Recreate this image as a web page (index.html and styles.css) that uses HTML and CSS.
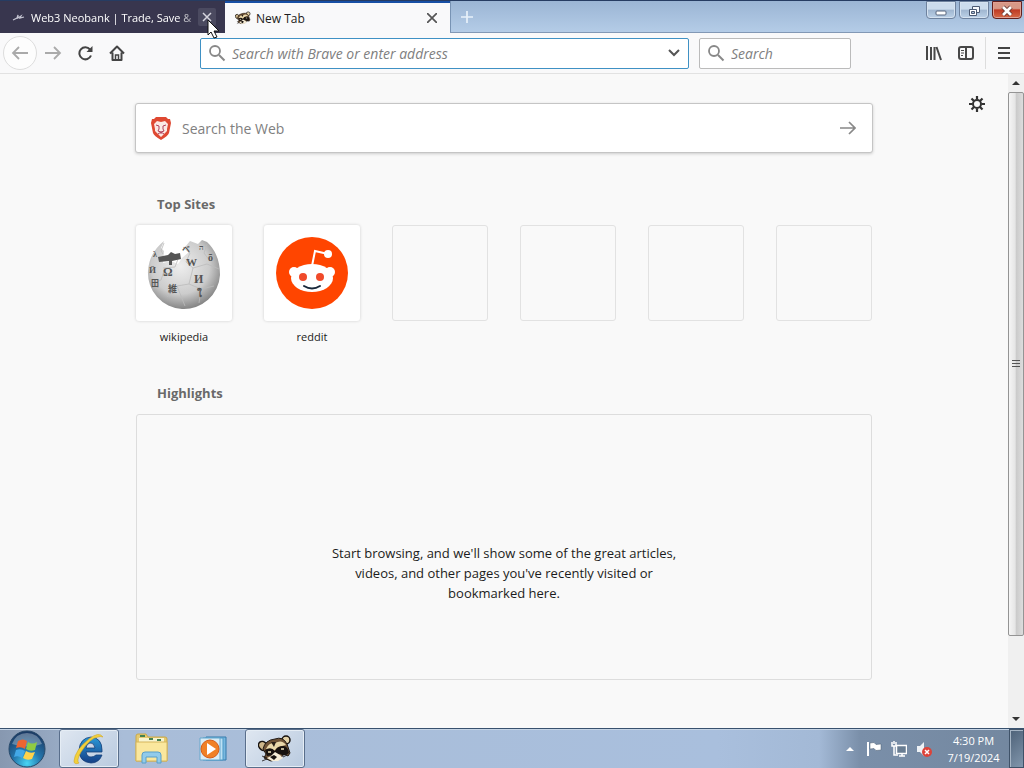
FILE: index.html
```html
<!DOCTYPE html>
<html lang="en">
<head>
  <meta charset="UTF-8" />
  <meta name="viewport" content="width=device-width, initial-scale=1.0"/>
  <title>New Tab</title>
  <link rel="stylesheet" href="styles.css">
</head>
<body>
  <header class="tab-bar">
    <div class="tab tab-inactive">
      <svg class="favicon" viewBox="0 0 16 16"><path d="M3 11l4-2 1-3v3l3-2-1 2 4-1" fill="none" stroke="#c5c5d2" stroke-width="1.2"/></svg>
      <span class="tab-title">Web3 Neobank | Trade, Save &amp;</span>
      <button class="tab-close" aria-label="Close tab">
        <svg width="10" height="10" viewBox="0 0 10 10"><path d="M1 1l8 8M9 1L1 9" stroke="currentColor" stroke-width="1.5"/></svg>
      </button>
      <svg class="cursor" width="13" height="20" viewBox="0 0 13 20"><path d="M1 1v15l3-3 3 6 3-1-3-6h5z" fill="#fff" stroke="#111" stroke-width="1"/></svg>
    </div>
    <div class="tab tab-active">
      <svg class="favicon" viewBox="0 0 34 28"><use href="#raccoon"/></svg>
      <span class="tab-title">New Tab</span>
      <button class="tab-close" aria-label="Close tab">
        <svg width="10" height="10" viewBox="0 0 10 10"><path d="M0 0l10 10M10 0L0 10" stroke="currentColor" stroke-width="1.7"/></svg>
      </button>
    </div>
    <button class="new-tab" aria-label="New tab">
      <svg width="14" height="14" viewBox="0 0 14 14"><path d="M7 1v12M1 7h12" stroke="#e8f1fa" stroke-width="1.7"/></svg>
    </button>
    <div class="window-buttons">
      <button aria-label="Minimize"><svg width="28" height="15" viewBox="0 0 28 15"><rect x="9" y="8" width="10" height="4" rx="1" fill="#fff" stroke="#56647d"/></svg></button>
      <button aria-label="Restore"><svg width="28" height="15" viewBox="0 0 28 15"><path d="M12.500 3.500h7v6h-7z" fill="#f7f9fc" stroke="#4c5a73"/><path d="M9.500 6.500h7v6h-7z" fill="#fff" stroke="#4c5a73"/><path d="M11.500 8.500h3v2h-3z" fill="#a9bdd6" stroke="#4c5a73"/></svg></button>
      <button class="window-close" aria-label="Close"><svg width="28" height="15" viewBox="0 0 28 15"><path d="M10 4l8 8M18 4l-8 8" stroke="#66352f" stroke-width="4.500"/><path d="M10 4l8 8M18 4l-8 8" stroke="#fff" stroke-width="2.700"/></svg></button>
    </div>
  </header>

  <nav class="toolbar">
    <button class="back" aria-label="Back">
      <svg width="18" height="16" viewBox="0 0 18 16"><path d="M17 8H2M8 2L2 8l6 6" fill="none" stroke="#aaa" stroke-width="1.800"/></svg>
    </button>
    <button class="tool" aria-label="Forward">
      <svg width="18" height="16" viewBox="0 0 18 16"><path d="M1 8h15M10 2l6 6-6 6" fill="none" stroke="#aaa" stroke-width="1.800"/></svg>
    </button>
    <button class="tool" aria-label="Reload">
      <svg width="16" height="16" viewBox="0 0 16 16"><path d="M14 10.500A6 6 0 1 1 13 4.500" fill="none" stroke="#444" stroke-width="2"/><path d="M15.500 1v6h-6z" fill="#444"/></svg>
    </button>
    <button class="tool" aria-label="Home">
      <svg width="16" height="16" viewBox="0 0 16 16"><path d="M1 8.500L8 1.500l7 7M3.500 7.500V15h9V7.500" fill="none" stroke="#444" stroke-width="2" stroke-linejoin="round"/><path d="M6.500 15v-5h3v5" fill="none" stroke="#444" stroke-width="1.500"/></svg>
    </button>
    <div class="field address">
      <svg width="18" height="18" viewBox="0 0 18 18"><circle cx="7" cy="7" r="5" fill="none" stroke="#888" stroke-width="1.800"/><path d="M11 11l5.500 5.500" stroke="#888" stroke-width="2"/></svg>
      <input type="text" aria-label="Address" placeholder="Search with Brave or enter address">
      <button class="dropdown" aria-label="Show history">
        <svg width="12" height="8" viewBox="0 0 12 8"><path d="M1 1l5 5 5-5" fill="none" stroke="#555" stroke-width="2"/></svg>
      </button>
    </div>
    <div class="field search">
      <svg width="18" height="18" viewBox="0 0 18 18"><circle cx="7" cy="7" r="5" fill="none" stroke="#888" stroke-width="1.800"/><path d="M11 11l5.500 5.500" stroke="#888" stroke-width="2"/></svg>
      <input type="text" aria-label="Search" placeholder="Search">
    </div>
    <div class="tools-end">
      <button class="tool" aria-label="Library">
        <svg width="16" height="16" viewBox="0 0 16 16"><path d="M1 1v14M5 2v13M8.500 2v13M10.500 2L15 15" stroke="#484848" stroke-width="2"/></svg>
      </button>
      <button class="tool" aria-label="Sidebars">
        <svg width="16" height="16" viewBox="0 0 16 16"><rect x="1" y="2" width="14" height="12" rx="2" fill="none" stroke="#484848" stroke-width="2"/><path d="M8 2v12" stroke="#484848" stroke-width="2"/><path d="M3 5.500h3M3 8h3M3 10.500h2" stroke="#484848"/></svg>
      </button>
      <button class="tool menu" aria-label="Menu">
        <svg width="12" height="12" viewBox="0 0 12 12"><path d="M0 1h12M0 6h12M0 11h12" stroke="#444" stroke-width="2"/></svg>
      </button>
    </div>
  </nav>

  <div class="viewport">
    <main>
      <button class="settings" aria-label="Settings">
        <svg width="16" height="16" viewBox="0 0 16 16"><circle cx="8" cy="8" r="4" fill="none" stroke="#333" stroke-width="2"/><path d="M8 0v3.500M8 12.500V16M0 8h3.500M12.500 8H16M2.500 2.500L5 5M11 11l2.500 2.500M13.500 2.500L11 5M5 11l-2.500 2.500" stroke="#333" stroke-width="2.200"/></svg>
      </button>
      <div class="content">
        <form class="web-search">
          <svg width="22" height="25" viewBox="0 0 22 25"><path d="M6 1h10l2 2h2l1 4-2 10q-1 3-8 7-7-4-8-7L1 7l1-4h2z" fill="#df4932"/><path d="M7 5l4 1 4-1 3 3-1 5v2l-6 6-6-6v-2L4 8z" fill="#fbe9e4"/><path d="M6 9l3 1M16 9l-3 1M9 10v3l-1 2 3 1 3-1-1-2v-3M11 16v2M8 18l3-2 3 2" fill="none" stroke="#b0405a" stroke-width="1"/></svg>
          <input type="text" aria-label="Search the Web" placeholder="Search the Web">
          <button type="button" aria-label="Search">
            <svg width="16" height="14" viewBox="0 0 16 14"><path d="M0 7h15M9 1l6 6-6 6" fill="none" stroke="#888" stroke-width="1.700"/></svg>
          </button>
        </form>

        <h2>Top Sites</h2>
        <div class="sites">
          <a class="site" href="#wikipedia">
            <span class="tile">
              <svg width="76" height="76" viewBox="0 0 76 76">
                <defs><radialGradient id="globe" cx="45%" cy="38%" r="62%"><stop offset="0" stop-color="#eee"/><stop offset=".65" stop-color="#ccc"/><stop offset="1" stop-color="#858585"/></radialGradient></defs>
                <path d="M18 6Q3 18 2 36a36 36 0 0 0 72 4Q74 19 61 7l-5-2-4 4-8-3-5 6 4 5-7 6-4 6-7-3-8 2 1-12-3-3z" fill="url(#globe)"/>
                <path d="M18 8l-3 8 2 3M17 33l12-1 3-8M37 12l7 6-4 9 7 6M47 33l14-4 12 5M47 33l-4 16 12 5M19 33l-4 12-10 4M43 49l-12 2-10 11M31 51l8 20M55 54l13-3M55 54l-2 14M61 9l-3 9 6 8" fill="none" stroke="#bbb" stroke-width=".8"/>
                <path d="M12 22l10-2 3-3 4 2 5-1 1 6-9 2v4h-3v-4l-10 1z" fill="#555"/>
                <g class="globe-letters"><text x="17" y="41" font-size="12">Ω</text><text x="40" y="31" font-size="11">W</text><text x="48" y="48" font-size="12">И</text><text x="22" y="57" font-size="9">維</text><text x="36" y="17" font-size="8">ベ</text><text x="62" y="26" font-size="10">õ</text><text x="3" y="38" font-size="9">Й</text><text x="5" y="51" font-size="8">田</text><text x="51" y="62" font-size="10">ใ</text><text x="53" y="15" font-size="8">ה</text><text x="7" y="22" font-size="8">λ</text></g>
              </svg>
            </span>
            <span class="site-name">wikipedia</span>
          </a>
          <a class="site" href="#reddit">
            <span class="tile">
              <svg width="76" height="76" viewBox="0 0 76 76"><circle cx="38" cy="38" r="36" fill="#ff4500"/><path d="M38 31l3-15 13 3" fill="none" stroke="#fff" stroke-width="2"/><circle cx="54" cy="19" r="4" fill="#fff"/><circle cx="20" cy="37" r="5" fill="#fff"/><circle cx="56" cy="37" r="5" fill="#fff"/><ellipse cx="38" cy="43" rx="21" ry="14" fill="#fff"/><circle cx="29" cy="42" r="4" fill="#f04a2a"/><circle cx="46" cy="42" r="4" fill="#f04a2a"/><path d="M30 51q8 5 16 0" fill="none" stroke="#18283a" stroke-width="2" stroke-linecap="round"/></svg>
            </span>
            <span class="site-name">reddit</span>
          </a>
          <div class="site"><span class="tile tile-empty"></span></div>
          <div class="site"><span class="tile tile-empty"></span></div>
          <div class="site"><span class="tile tile-empty"></span></div>
          <div class="site"><span class="tile tile-empty"></span></div>
        </div>

        <h2>Highlights</h2>
        <section class="highlights">
          <p>Start browsing, and we'll show some of the great articles, videos, and other pages you've recently visited or bookmarked here.</p>
        </section>
      </div>
    </main>
    <div class="scrollbar">
      <button aria-label="Scroll up"><svg width="8" height="4" viewBox="0 0 8 4"><path d="M0 4l4-4 4 4z" fill="#333"/></svg></button>
      <div class="track">
        <div class="thumb"><svg width="8" height="8" viewBox="0 0 8 8"><path d="M0 .5h8M0 3.500h8M0 6.500h8" stroke="#555"/></svg></div>
      </div>
      <button aria-label="Scroll down"><svg width="8" height="4" viewBox="0 0 8 4"><path d="M0 0l4 4 4-4z" fill="#333"/></svg></button>
    </div>
  </div>

  <footer class="taskbar">
    <button class="start" aria-label="Start">
      <svg width="38" height="38" viewBox="0 0 38 38">
        <defs><radialGradient id="orb" cx="50%" cy="90%" r="85%"><stop offset="0" stop-color="#49d5f4"/><stop offset=".45" stop-color="#2477ad"/><stop offset="1" stop-color="#1b3b66"/></radialGradient></defs>
        <circle cx="19" cy="19" r="18" fill="url(#orb)" stroke="#284969"/><path d="M4 14Q8 3 19 3t15 11q-14 5-30 0z" fill="#fff" opacity=".3"/>
        <path d="M10 11q5-3 9 0l-2 8q-4-3-9-1z" fill="#ee6531"/><path d="M20 12q4 3 9 0l-2 8q-5 2-9-1z" fill="#8fcb43"/><path d="M8 20q5-2 9 1l-3 7q-4-3-8-1z" fill="#43a8e7"/><path d="M18 21q4 3 9 1l-3 7q-5 2-9-1z" fill="#ffd24a"/>
      </svg>
    </button>
    <button class="task task-open" aria-label="Internet Explorer">
      <svg width="34" height="32" viewBox="0 0 34 32">
        <defs><linearGradient id="ie" x2="0" y2="1"><stop offset="0" stop-color="#2a9ad8"/><stop offset="1" stop-color="#153f86"/></linearGradient></defs>
        <path d="M30 19H14q1 5 5 5 3 0 5-2h6q-3 8-11 8-12-1-12-13Q8 5 19 4q11 1 11 13zM14 15h9q-1-5-4-5-4 0-5 5z" fill="url(#ie)" stroke="#153f79" stroke-width=".8" fill-rule="evenodd"/>
        <path d="M31 4Q27-2 17 6 3 17 2 28q0 4 5 2-3-2 2-11Q18 5 26 4q3-1 5 0z" fill="#f2d03c" stroke="#d1a724" stroke-width=".6"/>
      </svg>
    </button>
    <button class="task" aria-label="Windows Explorer">
      <svg width="34" height="32" viewBox="0 0 34 32"><path d="M2 3q0-2 2-2h8l2 3h17q2 0 2 2v22H2z" fill="#e5ca70" stroke="#c9a84b"/><path d="M5 5h25v5H5z" fill="#f8f4cf"/><path d="M6 3h5M15 6h4M23 7h4" stroke="#438252" stroke-width="2"/><path d="M2 9h31v19H2z" fill="#fae79d" stroke="#d5b65c"/><path d="M8 30v-8q0-3 3-3h13q3 0 3 3v8h-4v-6H12v6z" fill="#91cbea" stroke="#589fc9"/></svg>
    </button>
    <button class="task" aria-label="Media Player">
      <svg width="34" height="32" viewBox="0 0 34 32"><path d="M10 4h20v23H10z" fill="#79b8df" stroke="#347bac"/><path d="M7 5h20v22H7z" fill="#bce1f4" stroke="#4c98c6"/><path d="M4 5h20v22H4z" fill="#d9edf6" stroke="#66a8cd"/><circle cx="14" cy="16" r="9" fill="#f08126" stroke="#d75c17"/><path d="M11 10l9 6-9 6z" fill="#fff"/></svg>
    </button>
    <button class="task task-open" aria-label="Browser">
      <svg width="34" height="28" viewBox="0 0 34 28">
        <g id="raccoon">
          <ellipse cx="5" cy="11" rx="4" ry="5" fill="#cdb68b" stroke="#17120f" stroke-width="1.500" transform="rotate(-40 5 11)"/>
          <circle cx="28" cy="5" r="4" fill="#e5d3a8" stroke="#17120f" stroke-width="1.500"/>
          <path d="M5 14Q7 5 17 4q8-3 12 5l3 9-2 3-4-2-4 5-9 2-7-3 2-4z" fill="#705437" stroke="#221a14"/>
          <path d="M8 14q3-7 9-6 7-4 11 2l-8 2-4 4z" fill="#ead8aa"/>
          <path d="M13 7l3 5 2-5z" fill="#2b211a"/>
          <path d="M7 15q6-4 10 1 2-5 9-5 4 1 5 7-4 4-9 1l-5 1-8 1z" fill="#17120f"/>
          <path d="M17 17l5 3 3 3-5 3h-6l-5-3 4-2z" fill="#f7eed8"/>
          <path d="M12 22l4-2 3 2-3 3z" fill="#17120f"/>
          <path d="M10 17h3M23 14h3" stroke="#f2e5bd" stroke-width="1.500"/>
          <path d="M4 21l5 2M4 26l5-2M29 20l-4 2" stroke="#17120f" stroke-width=".8"/>
        </g>
      </svg>
    </button>
    <div class="tray">
      <svg width="8" height="4" viewBox="0 0 8 4"><path d="M0 4l4-4 4 4z" fill="#fff"/></svg>
      <svg width="16" height="16" viewBox="0 0 16 16"><path d="M2 1v14" stroke="#fff" stroke-width="2"/><path d="M4 2l4-.5 2 2 5-.5v6l-5 .5-2-2-4 .5z" fill="#fff" stroke="#4b5c70" stroke-width=".5"/></svg>
      <svg width="16" height="16" viewBox="0 0 16 16"><path d="M5.500 4.500h10v8h-10z" fill="#697d92" stroke="#fff" stroke-width="1.500"/><path d="M8 15h6M11 12v3M1 1v4h4V1M3 5v9h4M3 0v3" fill="none" stroke="#fff" stroke-width="1.500"/></svg>
      <svg width="16" height="16" viewBox="0 0 16 16"><path d="M1 5h3l4-4v14l-4-4H1z" fill="#edf1f5"/><circle cx="11" cy="11" r="5" fill="#dc4339"/><path d="M9 9l4 4M13 9l-4 4" stroke="#fff" stroke-width="1.500"/></svg>
    </div>
    <div class="clock">
      <time>4:30 PM</time>
      <time datetime="2024-07-19">7/19/2024</time>
    </div>
    <button class="show-desktop" aria-label="Show desktop"></button>
  </footer>
</body>
</html>
```
FILE: styles.css
```css
:root {
  --tab-dark: #38364e;
  --chrome: #f9f9fa;
  --page: #f9f9f9;
  --focus: #3f91c4;
  --muted: #808080;
  --ink: #1c1c20;
}

* {
  box-sizing: border-box;
}

body {
  margin: 0;
  height: 100vh;
  display: flex;
  flex-direction: column;
  overflow: hidden;
  font-family: "Open Sans", "Noto Sans", "Noto Sans CJK SC", sans-serif;
  font-size: 12px;
  color: var(--ink);
  background: var(--page);
}

button {
  display: flex;
  align-items: center;
  justify-content: center;
  flex-shrink: 0;
  padding: 0;
  border: none;
  background: none;
  color: inherit;
}

svg {
  flex-shrink: 0;
}

input {
  flex: 1;
  min-width: 0;
  padding: 0;
  border: none;
  outline: none;
  background: none;
  font-family: inherit;
}

input::placeholder {
  color: var(--muted);
  opacity: 1;
}

/* tabs */
.tab-bar {
  display: flex;
  height: 33px;
  flex-shrink: 0;
  border-top: 1px solid #263c62;
  border-bottom: 1px solid #8298b5;
  background: linear-gradient(#9bb5d4, #b4cce7);
}

.tab {
  position: relative;
  display: flex;
  align-items: center;
  width: 225px;
  height: 32px;
  padding: 0 9px 0 10px;
}

.tab-inactive {
  color: #fff;
  background: var(--tab-dark);
}

.tab-active {
  border-top: 2px solid #174fa5;
  background: var(--chrome);
}

.favicon {
  width: 16px;
  height: 16px;
  margin-right: 5px;
}

.tab-title {
  flex: 1;
  white-space: nowrap;
}

.tab-inactive .tab-title {
  font-size: 11px;
  font-weight: 500;
  mask-image: linear-gradient(to right, #000 90%, transparent 105%);
}

.tab-close {
  width: 18px;
  height: 18px;
  margin-left: 4px;
  border-radius: 2px;
  color: #555;
}

.tab-inactive .tab-close {
  color: #d5d5de;
  background: #4b4a60;
}

.cursor {
  position: absolute;
  top: 18px;
  left: 207px;
  z-index: 2;
}

.new-tab {
  width: 32px;
  border-left: 1px solid #7893b4;
}

.window-buttons {
  display: flex;
  gap: 3px;
  height: 18px;
  margin: 0 2px 0 auto;
}

.window-buttons button {
  width: 30px;
  border: 1px solid #6e829e;
  border-radius: 0 0 4px 4px;
  background: linear-gradient(#ccdced 45%, #a0b6d0 50%, #bcd1e7);
  box-shadow: inset 0 0 0 1px #d5e2f0;
}

.window-buttons .window-close {
  border-color: #63201d;
  background: linear-gradient(#d79887 40%, #bf3b25 50%, #d76a47);
  box-shadow: inset 0 0 0 1px #dfa194;
}

/* toolbar */
.toolbar {
  display: flex;
  align-items: center;
  height: 41px;
  flex-shrink: 0;
  padding: 0 2px 0 3px;
  border-bottom: 1px solid #e2e2e2;
  background: var(--chrome);
}

.back {
  width: 34px;
  height: 34px;
  border: 1px solid #ddd;
  border-radius: 50%;
  background: #fdfdfd;
}

.tool {
  width: 32px;
  height: 32px;
}

.field {
  display: flex;
  align-items: center;
  height: 31px;
  padding: 0 8px 0 7px;
  gap: 6px;
  border: 1px solid #bbb;
  border-radius: 2px;
  background: #fff;
}

.field input {
  height: 22px;
  padding-top: 1px;
  font-size: 14px;
  font-style: italic;
}

.address {
  flex: 1;
  margin-left: 67px;
  border-color: var(--focus);
}

.search {
  width: 152px;
  margin-left: 10px;
}

.tools-end {
  display: flex;
  margin-left: 67px;
}

.menu {
  width: 37px;
  margin-left: 3px;
  border-left: 1px solid #ddd;
}

/* new tab page */
.viewport {
  display: flex;
  flex: 1;
  min-height: 0;
}

main {
  position: relative;
  flex: 1;
  overflow: hidden;
}

.settings {
  position: absolute;
  top: 14px;
  right: 15px;
  width: 32px;
  height: 32px;
}

.content {
  max-width: 738px;
  margin: 0 auto;
  padding-top: 29px;
}

.web-search {
  display: flex;
  align-items: center;
  height: 50px;
  margin-bottom: 41px;
  padding: 0 16px 0 14px;
  gap: 10px;
  border: 1px solid #c5c5c5;
  border-radius: 3px;
  background: #fff;
  box-shadow: 0 1px 3px #ccc;
}

.web-search input {
  font-size: 14px;
}

h2 {
  margin: 0 22px 11px;
  font-size: 13px;
  line-height: 20px;
  color: #696969;
}

.sites {
  display: grid;
  grid-template-columns: repeat(6, 96px);
  justify-content: space-between;
  margin-bottom: 36px;
  padding: 0 1px;
}

.site {
  color: inherit;
  text-decoration: none;
  text-align: center;
}

.tile {
  display: flex;
  align-items: center;
  justify-content: center;
  height: 96px;
  border-radius: 3px;
  background: #fff;
  box-shadow: 0 0 3px #ccc;
}

.tile-empty {
  border: 1px solid #e2e2e2;
  background: none;
  box-shadow: none;
}

.site-name {
  display: block;
  margin-top: 6px;
  font-size: 11px;
  line-height: 20px;
}

.globe-letters {
  fill: #555;
  font-family: "Liberation Serif", "Noto Sans CJK JP", serif;
  font-weight: bold;
}

.highlights {
  display: flex;
  align-items: center;
  justify-content: center;
  height: 266px;
  margin: 0 1px;
  padding-top: 52px;
  border: 1px solid #ddd;
  border-radius: 3px;
}

.highlights p {
  width: 350px;
  margin: 0;
  font-size: 13px;
  line-height: 20px;
  text-align: center;
}

/* scrollbar */
.scrollbar {
  display: flex;
  flex-direction: column;
  width: 16px;
  background: #f0f0f0;
}

.scrollbar button {
  height: 18px;
}

.track {
  flex: 1;
}

.thumb {
  display: flex;
  align-items: center;
  justify-content: center;
  height: 88%;
  border: 1px solid #949494;
  border-radius: 2px;
  background: linear-gradient(to right, #f5f5f5, #e5e5e5 45%, #cacaca 50%, #ddd);
}

/* taskbar */
.taskbar {
  display: flex;
  height: 40px;
  flex-shrink: 0;
  border-top: 1px solid #38516e;
  background: linear-gradient(to right, #8798b0, #a9bdd8 12%, #a9bfdd 70%, #a3b9d6 80%, #7a8fa9 84%, #73879f);
  box-shadow: inset 0 1px #c6d5e6;
}

.start {
  width: 54px;
  margin-right: 5px;
}

.task {
  width: 60px;
  margin-right: 2px;
}

.task-open {
  border: 1px solid #596e8b;
  border-radius: 3px;
  background: linear-gradient(135deg, #dfe7f1, #b9cadf);
  box-shadow: inset 0 0 0 1px #e5edf5;
}

.tray {
  display: flex;
  align-items: center;
  gap: 9px;
  margin-left: auto;
}

.tray svg:first-child {
  margin-right: 3px;
}

.clock {
  display: flex;
  flex-direction: column;
  width: 77px;
  padding: 3px 0 0 6px;
  font-size: 11px;
  line-height: 17px;
  text-align: center;
  color: #fff;
}

.show-desktop {
  width: 15px;
  border: 1px solid #3f5268;
  background: linear-gradient(135deg, #4d6178, #8196ac);
  box-shadow: inset 1px 1px #a5b4c4;
}
```
